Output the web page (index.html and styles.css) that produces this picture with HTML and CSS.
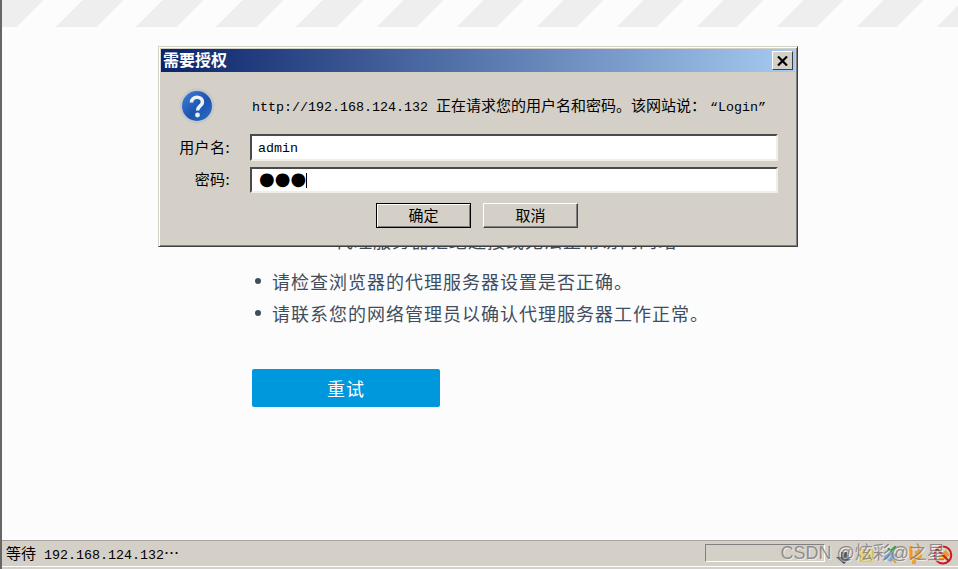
FILE: index.html
```html
<!DOCTYPE html>
<html>
<head>
    <title>需要授权</title>
    <meta charset="utf-8">
    <link rel="stylesheet" href="styles.css">
</head>
<body>
    <div class="window">
        <!-- Error page behind the dialog -->
        <div class="page">
            <div class="stripes"></div>
            <div class="content">
                <p class="lead">代理服务器拒绝连接或无法正常访问网站</p>
                <ul class="tips">
                    <li>请检查浏览器的代理服务器设置是否正确。</li>
                    <li>请联系您的网络管理员以确认代理服务器工作正常。</li>
                </ul>
                <button class="retry">重试</button>
            </div>
        </div>

        <!-- Status bar -->
        <div class="statusbar">
            <div class="status-text">等待<span class="latin"> 192.168.124.132</span>…</div>
            <div class="progress"></div>
            <div class="tray">
                <svg class="tray-down" width="16" height="12" viewBox="0 0 16 12"><path d="M5 0h6v5h5l-8 7-8-7h5z" fill="#4c565f"/></svg>
                <svg class="tray-note" width="15" height="14" viewBox="0 0 15 14"><path d="M1 2h13v11H1z" fill="#e6d67a" stroke="#c8b75a"/><path d="M4 6h7M4 9h7" stroke="#b6a548"/></svg>
                <svg class="tray-tool" width="18" height="18" viewBox="0 0 18 18"><path d="M2 12l7-8 7 5-6 7z" fill="#7ea6cf"/><path d="M7 2l3 3 5-5" fill="none" stroke="#3f9a3a" stroke-width="2"/><path d="M12 13l3 4" stroke="#d9a441" stroke-width="2"/></svg>
                <svg class="tray-page" width="14" height="18" viewBox="0 0 14 18"><path d="M3 0v12h8V0" fill="none" stroke="#ee9a22" stroke-width="3"/><path d="M7 5h7v7H7zM4 12h4v6H4z" fill="#f0a030"/></svg>
                <svg class="tray-block" width="20" height="20" viewBox="0 0 20 20"><path d="M4 12l9-7 4 5-8 6z" fill="#e89a30"/><circle cx="10" cy="10" r="8.5" fill="none" stroke="#d01818" stroke-width="2"/><path d="M4 4l12 12" stroke="#d01818" stroke-width="2"/></svg>
            </div>
            <div class="watermark">CSDN @炫彩@之星</div>
        </div>

        <!-- Auth dialog -->
        <div class="dialog">
            <div class="titlebar">
                <span class="title">需要授权</span>
                <div class="close">
                    <svg width="11" height="10" viewBox="0 0 11 10"><path d="M1 0.5l9 9M10 0.5l-9 9" stroke="#000" stroke-width="2.2"/></svg>
                </div>
            </div>
            <div class="dialog-body">
                <div class="message-row">
                    <svg class="help-icon" width="36" height="36" viewBox="0 0 36 36">
                        <defs>
                            <linearGradient id="helpBlue" x1="0" y1="0" x2="1" y2="1">
                                <stop offset="0" stop-color="#3f7fd6"/>
                                <stop offset="0.55" stop-color="#1c55b0"/>
                                <stop offset="1" stop-color="#2a6cc4"/>
                            </linearGradient>
                        </defs>
                        <circle cx="18" cy="18" r="17.5" fill="#c4c6ca"/>
                        <circle cx="18" cy="18" r="15" fill="url(#helpBlue)"/>
                        <path d="M12.5 14.5c0-7 11-7 11 -.5c0 4-5 4-5 8.5" fill="none" stroke="#eef0f4" stroke-width="3.6"/>
                        <circle cx="18.5" cy="27" r="2.4" fill="#eef0f4"/>
                    </svg>
                    <div class="message"><span class="latin">http://192.168.124.132 </span>正在请求您的用户名和密码。该网站说：<span class="latin quote">“Login”</span></div>
                </div>
                <div class="field">
                    <span class="label">用户名:</span>
                    <div class="input"><span class="latin">admin</span></div>
                </div>
                <div class="field second">
                    <span class="label">密码:</span>
                    <div class="input"><span class="dots">●●●</span><span class="caret"></span></div>
                </div>
                <div class="buttons">
                    <div class="btn default">确定</div>
                    <div class="btn">取消</div>
                </div>
            </div>
        </div>
    </div>
</body>
</html>
```

FILE: styles.css
```css
body {
    margin: 0;
    font-family: "Noto Sans CJK SC", sans-serif;
    background-color: #fcfcfc;
    overflow: hidden;
}
.window {
    position: relative;
    height: 569px;
    display: flex;
    flex-direction: column;
    border-left: 2px solid #666;
    box-sizing: border-box;
}
.page {
    flex: 1;
    background-color: #fcfcfc;
}
.stripes {
    height: 27px;
    background: repeating-linear-gradient(135deg, #fcfcfc 0, #fcfcfc 0.7px, #eeeeee 0.7px, #eeeeee 29px, #fcfcfc 29px, #fcfcfc 56.57px);
}
.content {
    padding: 197px 0 0 250px;
    color: #3f4e5e;
    font-size: 18px;
    letter-spacing: 1px;
}
.lead {
    margin: 0 0 9px 83px;
    line-height: 32px;
    height: 32px;
}
.tips {
    margin: 0;
    padding: 0 0 0 3px;
    list-style: none;
}
.tips li {
    display: flex;
    align-items: center;
    line-height: 32px;
}
.tips li::before {
    content: "";
    width: 6px;
    height: 6px;
    margin-right: 11px;
    border-radius: 50%;
    background-color: #3f4e5e;
}
.retry {
    display: block;
    margin-top: 40px;
    width: 188px;
    height: 38px;
    border: none;
    border-radius: 2px;
    background-color: #0098dd;
    color: #fff;
    font-family: inherit;
    font-size: 18px;
    letter-spacing: 1px;
}

/* status bar */
.statusbar {
    position: relative;
    height: 25px;
    margin-bottom: 2px;
    display: flex;
    align-items: center;
    background-color: #d4d0c8;
    border-top: 1px solid #a8a49c;
    border-bottom: 1px solid #fff;
    box-shadow: 0 2px 0 #d4d0c8;
    color: #000;
    font-size: 15px;
    padding-left: 4px;
}
.status-text {
    white-space: nowrap;
    flex: 1;
    margin-bottom: 3px;
}
.progress {
    width: 120px;
    height: 18px;
    box-sizing: border-box;
    border: 1px solid;
    border-color: #808080 #fff #fff #808080;
    margin-bottom: 1px;
}
.tray {
    display: flex;
    align-items: center;
    gap: 7px;
    margin: 3px 5px 0 11px;
    width: 117px;
}
.tray-down {
    margin-top: 6px;
}
.tray-page {
    margin-left: 3px;
}
.tray-block {
    margin-left: 4px;
}
.watermark {
    position: absolute;
    right: 13px;
    top: -3px;
    font-family: "Liberation Sans", "Noto Sans CJK SC", sans-serif;
    font-size: 18px;
    color: rgba(120, 120, 120, 0.8);
    text-shadow: 1px 1px 0 rgba(255, 255, 255, 0.6);
    white-space: nowrap;
}
.latin {
    font-family: "Liberation Mono", monospace;
    font-size: 13.33px;
    white-space: pre;
}

/* dialog */
.dialog {
    position: absolute;
    left: 156px;
    top: 46px;
    width: 640px;
    height: 201px;
    box-sizing: border-box;
    padding: 2px;
    background-color: #d4d0c8;
    border: 1px solid;
    border-color: #d4d0c8 #404040 #404040 #d4d0c8;
    box-shadow: inset 1px 1px 0 #fff, inset -1px -1px 0 #808080;
    color: #000;
    font-size: 15px;
}
.titlebar {
    height: 23px;
    display: flex;
    align-items: center;
    justify-content: space-between;
    padding: 0 2px;
    background: linear-gradient(90deg, #0a246a, #a6caf0);
}
.title {
    color: #fff;
    font-size: 16px;
    font-weight: bold;
    margin-bottom: 3px;
}
.close {
    width: 21px;
    height: 19px;
    box-sizing: border-box;
    display: flex;
    align-items: center;
    justify-content: center;
    background-color: #d4d0c8;
    border: 1px solid;
    border-color: #fff #404040 #404040 #fff;
}
.close svg {
    display: block;
}
.dialog-body {
    padding: 0 17px 0 0;
}
.message-row {
    height: 62px;
    box-sizing: border-box;
    padding-top: 6px;
    display: flex;
    align-items: center;
}
.help-icon {
    margin: 0 37px 0 18px;
    flex: none;
}
.message {
    white-space: nowrap;
    margin-bottom: 3px;
}
.quote {
    margin-left: 4px;
}
.field {
    display: flex;
    align-items: center;
}
.field.second {
    margin-top: 6px;
}
.label {
    width: 69px;
    text-align: right;
    letter-spacing: 0.4px;
    margin-right: 20px;
    margin-bottom: 3px;
    flex: none;
}
.input {
    flex: 1;
    height: 27px;
    box-sizing: border-box;
    display: flex;
    align-items: center;
    padding-left: 6px;
    background-color: #fff;
    border: 2px solid;
    border-color: #4a4a4a #f0eee8 #f0eee8 #4a4a4a;
}
.input .latin {
    padding-top: 2px;
}
.second .input {
    height: 26px;
}
.dots {
    font-family: "DejaVu Sans", sans-serif;
    font-size: 18px;
    line-height: 1;
    margin: 0 0 3px 1px;
}
.caret {
    width: 1px;
    height: 15px;
    background-color: #000;
}
.buttons {
    display: flex;
    justify-content: center;
    gap: 12px;
    margin-top: 10px;
    padding-left: 15px;
}
.btn {
    width: 95px;
    height: 25px;
    padding-bottom: 2px;
    box-sizing: border-box;
    display: flex;
    align-items: center;
    justify-content: center;
    background-color: #d4d0c8;
    border: 1px solid;
    border-color: #fff #404040 #404040 #fff;
    box-shadow: inset -1px -1px 0 #808080;
}
.btn.default {
    border: 1px solid #000;
    box-shadow: inset 1px 1px 0 #fff, inset -1px -1px 0 #808080;
}
```
